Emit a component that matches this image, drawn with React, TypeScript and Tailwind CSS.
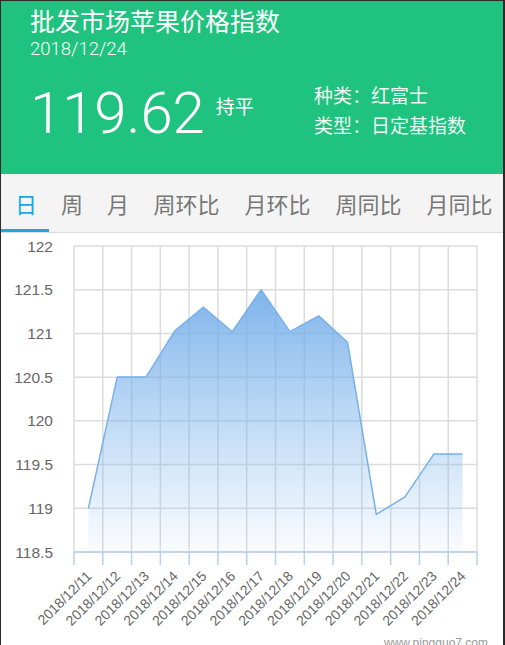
const tabs = ['日', '周', '月', '周环比', '月环比', '周同比', '月同比']

const dates = [
  '2018/12/11', '2018/12/12', '2018/12/13', '2018/12/14', '2018/12/15', '2018/12/16', '2018/12/17',
  '2018/12/18', '2018/12/19', '2018/12/20', '2018/12/21', '2018/12/22', '2018/12/23', '2018/12/24',
]
const values = [119.0, 120.5, 120.5, 121.03, 121.3, 121.02, 121.5, 121.02, 121.2, 120.9, 118.93, 119.13, 119.62, 119.62]
const yTicks = [122, 121.5, 121, 120.5, 120, 119.5, 119, 118.5]

const left = 74
const right = 477
const top = 246
const bottom = 552
const step = (right - left) / dates.length
const toY = (v: number) => top + ((122 - v) / 3.5) * (bottom - top)
const catX = (i: number) => left + (i + 0.5) * step

function Chart() {
  const pts = values.map((v, i) => `${catX(i).toFixed(1)},${toY(v).toFixed(1)}`)
  const area = `${catX(0).toFixed(1)},${bottom} ${pts.join(' ')} ${catX(values.length - 1).toFixed(1)},${bottom}`
  const font = '"Liberation Sans", Arial, sans-serif'

  return (
    <svg width={502} height={412} viewBox="1 233 502 412" className="block">
      <defs>
        <linearGradient id="fill" gradientUnits="userSpaceOnUse" x1="0" y1="290" x2="0" y2="552">
          <stop offset="0" stopColor="#6eaae8" stopOpacity="0.88" />
          <stop offset="1" stopColor="#7db4ec" stopOpacity="0.04" />
        </linearGradient>
      </defs>

      {yTicks.map((t) => (
        <line key={t} x1={left} x2={right} y1={toY(t)} y2={toY(t)} stroke="#dcdcdc" strokeWidth={1.5} />
      ))}
      {Array.from({ length: dates.length + 1 }, (_, i) => (
        <line key={i} x1={left + i * step} x2={left + i * step} y1={top} y2={bottom} stroke="#dcdcdc" strokeWidth={1.5} />
      ))}

      <polygon points={area} fill="url(#fill)" />
      <polyline points={pts.join(' ')} fill="none" stroke="#78b0ea" strokeWidth={1.5} strokeLinejoin="round" />

      <line x1={left} x2={right} y1={bottom} y2={bottom} stroke="#b6cfee" strokeWidth={1.5} />
      {Array.from({ length: dates.length + 1 }, (_, i) => (
        <line key={i} x1={left + i * step} x2={left + i * step} y1={bottom} y2={565} stroke="#b6cfee" strokeWidth={1.5} />
      ))}

      {yTicks.map((t) => (
        <text key={t} x={53} y={toY(t) + 5.5} textAnchor="end" fontSize={15.5} fill="#666" fontFamily={font}>
          {t}
        </text>
      ))}

      {dates.map((d, i) => {
        const x = catX(i) + 4
        const y = 577
        return (
          <text
            key={d}
            x={x}
            y={y}
            textAnchor="end"
            fontSize={14}
            fill="#666"
            fontFamily={font}
            transform={`rotate(-45 ${x} ${y})`}
          >
            {d}
          </text>
        )
      })}

      <text x={488} y={647} textAnchor="end" fontSize={12} fill="#999" fontFamily={font}>
        www.pingguo7.com
      </text>
    </svg>
  )
}

export default function App() {
  const cjk = { fontFamily: '"Noto Sans CJK SC", "Noto Sans", sans-serif' }
  const roboto = { fontFamily: 'Roboto, "Noto Sans CJK SC", sans-serif' }

  return (
    <div className="h-[645px] w-[505px] overflow-hidden border-t border-r-2 border-l border-[#2a2a2a] bg-white">
      <div className="h-[173px] bg-[#1fc27e] pt-[3px] pl-[29px] text-white">
        <div className="text-[25px] leading-[32px]" style={cjk}>
          批发市场苹果价格指数
        </div>
        <div className="text-[18.5px] font-light leading-[26px]" style={roboto}>
          2018/12/24
        </div>
        <div className="mt-[23px] flex items-start">
          <div className="flex w-[284px] items-start">
            <div className="-mt-[1px] text-[58px] font-light leading-none" style={roboto}>
              119.62
            </div>
            <div className="mt-[11px] ml-[11px] text-[19px] leading-none" style={cjk}>
              持平
            </div>
          </div>
          <div className="-mt-[5px] text-[19px] leading-[30px] text-white/95" style={cjk}>
            <div>种类：红富士</div>
            <div>类型：日定基指数</div>
          </div>
        </div>
      </div>

      <div className="flex h-[59px] overflow-hidden border-b border-[#dddddd] bg-[#f4f4f4] whitespace-nowrap" style={cjk}>
        {tabs.map((t, i) => (
          <div
            key={t}
            className={
              i === 0
                ? 'flex shrink-0 items-center border-b-[3px] border-[#1ea7e1] pt-[3px] pr-[12px] pl-[14px] text-[22px] text-[#1ba8e2]'
                : t.length === 1
                  ? 'flex shrink-0 items-center border-b-[3px] border-transparent px-[12px] pt-[3px] text-[22px] text-[#777]'
                  : 'flex shrink-0 items-center border-b-[3px] border-transparent px-[12.5px] pt-[3px] text-[22px] text-[#777]'
            }
          >
            {t}
          </div>
        ))}
      </div>

      <Chart />
    </div>
  )
}
